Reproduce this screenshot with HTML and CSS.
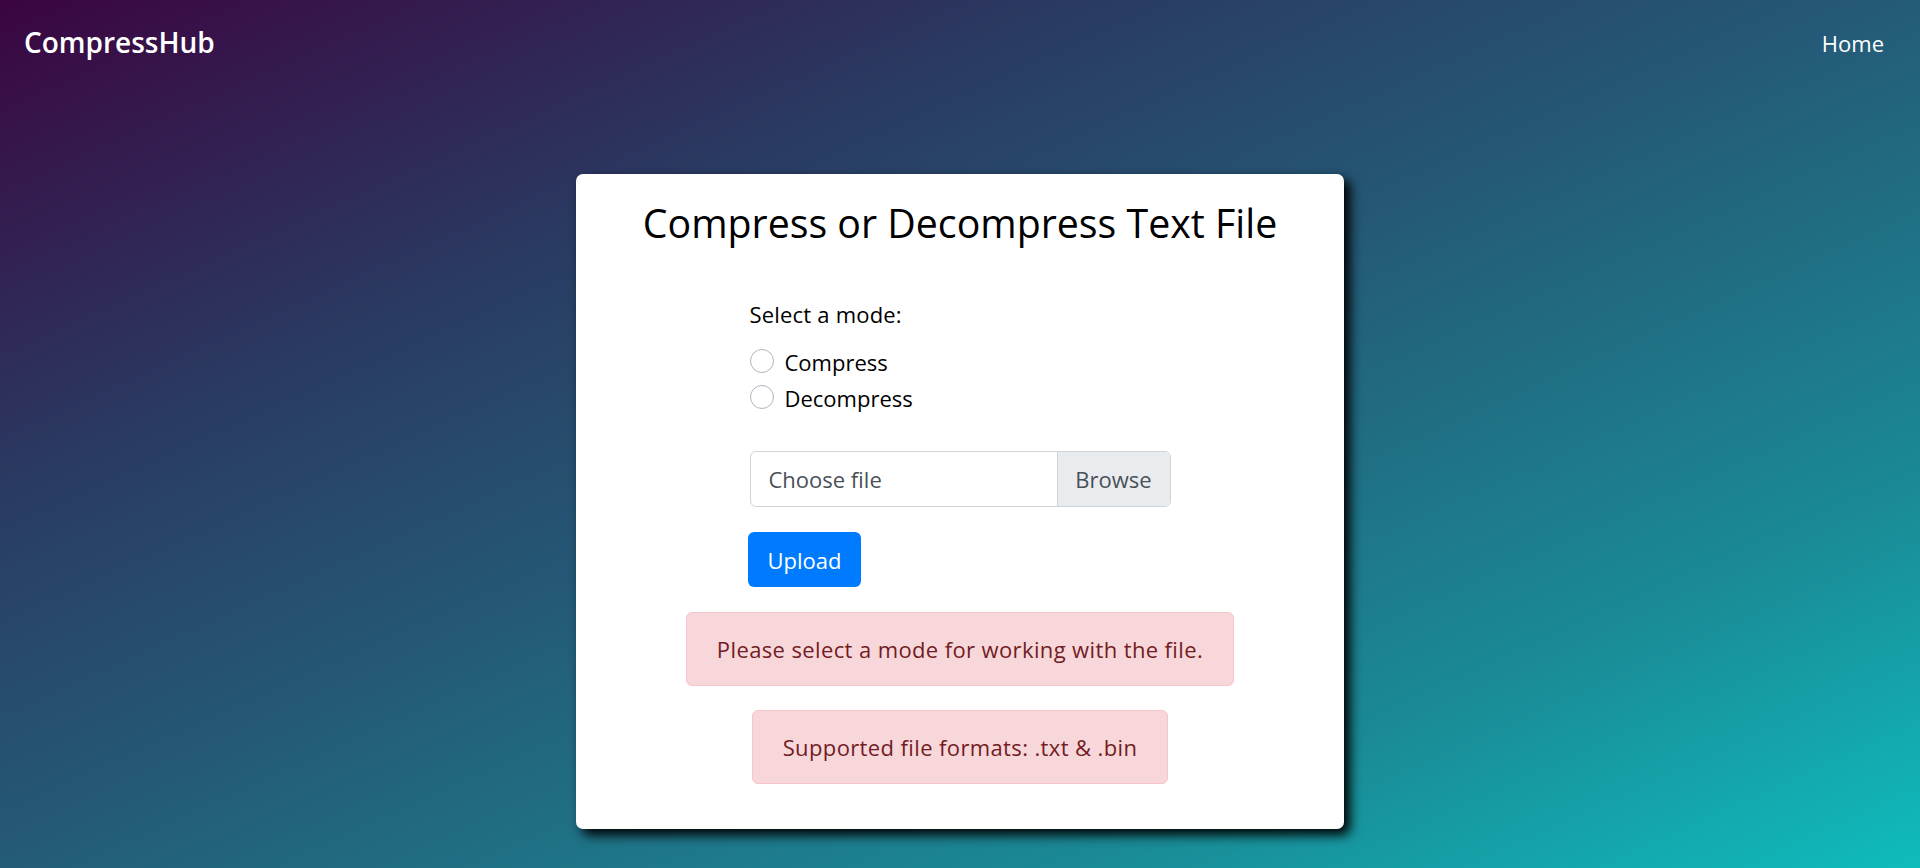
FILE: index.html
```html
<!DOCTYPE html>
<html lang="en">
<head>
<meta charset="utf-8">
<title>CompressHub</title>
<link rel="stylesheet" href="styles.css">
</head>
<body>
  <nav class="navbar">
    <a class="brand" href="#">CompressHub</a>
    <a class="nav-link" href="#">Home</a>
  </nav>
  <main class="card">
    <h1 class="title">Compress or Decompress Text File</h1>
    <form class="form">
      <div class="mode-label">Select a mode:</div>
      <label class="radio-row"><span class="radio"></span><span>Compress</span></label>
      <label class="radio-row"><span class="radio"></span><span>Decompress</span></label>
      <div class="file-input">
        <span class="file-text">Choose file</span>
        <span class="file-browse">Browse</span>
      </div>
      <button type="button" class="btn-upload">Upload</button>
    </form>
    <div class="alert">Please select a mode for working with the file.</div>
    <div class="alert">Supported file formats: .txt &amp; .bin</div>
  </main>
</body>
</html>
```
FILE: styles.css
```css
* { box-sizing: border-box; }
html, body { margin: 0; padding: 0; }
body {
  min-height: 100vh;
  font-family: "Open Sans", "Noto Sans", sans-serif;
  color: #000;
  background: linear-gradient(to bottom right, #3b0540 0%, #2a3a62 28%, #245b78 50%, #1a8a96 78%, #0fbcbc 100%);
  background-attachment: fixed;
  overflow: hidden;
}
.navbar {
  height: 84px;
  padding: 0 24px 0 24px;
  display: flex;
  align-items: center;
  justify-content: space-between;
}
.brand {
  color: #fff;
  text-decoration: none;
  font-size: 28px;
  font-weight: 600;
  line-height: 45px;
  padding-top: 1px;
}
.nav-link {
  color: #fff;
  text-decoration: none;
  font-size: 22px;
  line-height: 36px;
  padding: 1px 12px 0 12px;
}
.card {
  width: 768px;
  margin: 90px auto 0;
  height: 655px;
  background: #fff;
  border-radius: 7px;
  box-shadow: 6px 6px 12px #000;
  padding-top: 24px;
  display: flex;
  flex-direction: column;
  align-items: center;
}
.title {
  margin: 0;
  font-size: 39.3px;
  font-weight: 400;
  line-height: 50px;
  text-align: center;
}
.form {
  width: 421px;
  margin-top: 48px;
  display: flex;
  flex-direction: column;
  align-items: flex-start;
}
.mode-label {
  font-size: 22px;
  line-height: 36px;
  margin-bottom: 12px;
  letter-spacing: 0.2px;
}
.radio-row {
  display: flex;
  align-items: center;
  gap: 11px;
  font-size: 22px;
  line-height: 36px;
}
.radio {
  width: 24px;
  height: 24px;
  border-radius: 50%;
  border: 1px solid #adb5bd;
  background: #fff;
  margin-top: -2px;
}
.file-input {
  margin-top: 35px;
  width: 421px;
  height: 56px;
  border: 1px solid #ced4da;
  border-radius: 6px;
  display: flex;
  overflow: hidden;
  font-size: 22px;
  color: #495057;
}
.file-text {
  flex: 1;
  padding-left: 18px;
  display: flex;
  align-items: center;
}
.file-browse {
  width: 113px;
  background: #e9ecef;
  border-left: 1px solid #ced4da;
  display: flex;
  align-items: center;
  justify-content: center;
}
.btn-upload {
  margin-top: 25px;
  margin-left: -2px;
  height: 55px;
  padding: 0 20px;
  border: none;
  border-radius: 6px;
  background: #007bff;
  color: #fff;
  font-family: inherit;
  font-size: 22px;
  line-height: 36px;
}
.alert {
  margin-top: 25px;
  padding: 18px 30px;
  background: #f8d7da;
  border: 1px solid #f5c6cb;
  border-radius: 6px;
  color: #721c24;
  font-size: 22px;
  line-height: 36px;
  letter-spacing: 0.38px;
}
.alert + .alert { margin-top: 24px; }
```
